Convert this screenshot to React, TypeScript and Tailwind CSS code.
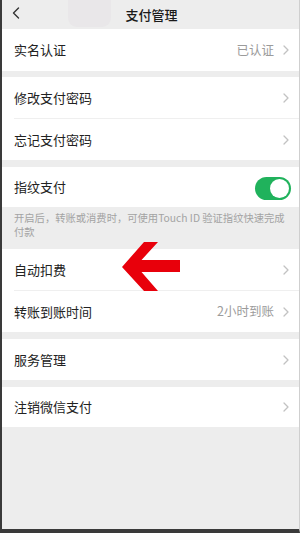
import React from "react";

const font = { fontFamily: '"Noto Sans CJK SC", "Noto Sans", sans-serif' };

function Chevron() {
  return (
    <svg width="6" height="10" viewBox="0 0 6 10" className="shrink-0">
      <path d="M1 1 L5 5 L1 9" fill="none" stroke="#c2c2c2" strokeWidth="1.3" strokeLinecap="round" strokeLinejoin="round" />
    </svg>
  );
}

function Row({ label, value, h = "h-[41px]" }: { label: string; value?: string; h?: string }) {
  return (
    <div className={`${h} bg-white flex items-center pl-[12px] pr-[10px]`}>
      <span className="flex-1 text-[13px] text-[#222222]">{label}</span>
      {value && <span className="text-[12.5px] text-[#9b9b9b] mr-[9px]">{value}</span>}
      <Chevron />
    </div>
  );
}

function Sep() {
  return (
    <div className="h-px bg-white pl-[12px]">
      <div className="h-px bg-[#efefef]" />
    </div>
  );
}

export default function App() {
  return (
    <div
      className="relative w-[300px] h-[533px] bg-[#ededed] border-l-2 border-l-[#3a3a3a] border-b-4 border-b-[#3a3a3a] border-r border-r-[#cfcfcf] overflow-hidden"
      style={font}
    >
      <div className="relative h-[29px] flex items-center justify-center">
        <div className="absolute left-[66px] top-[-8px] w-[43px] h-[35px] rounded-[9px] bg-[#e9e7e9]" />
        <svg width="8" height="12" viewBox="0 0 8 12" className="absolute left-[10px] top-[7px]">
          <path d="M6.5 1 L1.5 6 L6.5 11" fill="none" stroke="#333" strokeWidth="1.4" strokeLinecap="round" strokeLinejoin="round" />
        </svg>
        <span className="relative text-[13px] font-medium text-[#1a1a1a] ml-[2px]">支付管理</span>
      </div>

      <Row label="实名认证" value="已认证" h="h-[42px]" />
      <div className="h-[6px]" />
      <Row label="修改支付密码" />
      <Sep />
      <Row label="忘记支付密码" />
      <div className="h-[7px]" />
      <div className="h-[40px] bg-white flex items-center pl-[12px] pr-[8px]">
        <span className="flex-1 text-[13px] text-[#222222]">指纹支付</span>
        <div className="w-[36px] h-[23px] rounded-full bg-[#20b25c] relative mt-[2px]">
          <div className="absolute right-[2px] top-[2px] w-[19px] h-[19px] rounded-full bg-white" />
        </div>
      </div>
      <div className="h-[42px] pl-[12px] pr-[8px] pt-[4px] text-[10.3px] leading-[14px] text-[#a3a3a3]">
        开启后，转账或消费时，可使用Touch ID 验证指纹快速完成付款
      </div>
      <Row label="自动扣费" />
      <Sep />
      <Row label="转账到账时间" value="2小时到账" />
      <div className="h-[7px]" />
      <Row label="服务管理" />
      <div className="h-[7px]" />
      <Row label="注销微信支付" h="h-[40px]" />

      <svg className="absolute left-[-2px] top-0" width="300" height="533" viewBox="0 0 300 533">
        <polygon
          points="122,267 144,242 158,242 141.5,260 180,260 180,272 141.5,272 158,291 144,291"
          fill="#e8000b"
        />
      </svg>
    </div>
  );
}
